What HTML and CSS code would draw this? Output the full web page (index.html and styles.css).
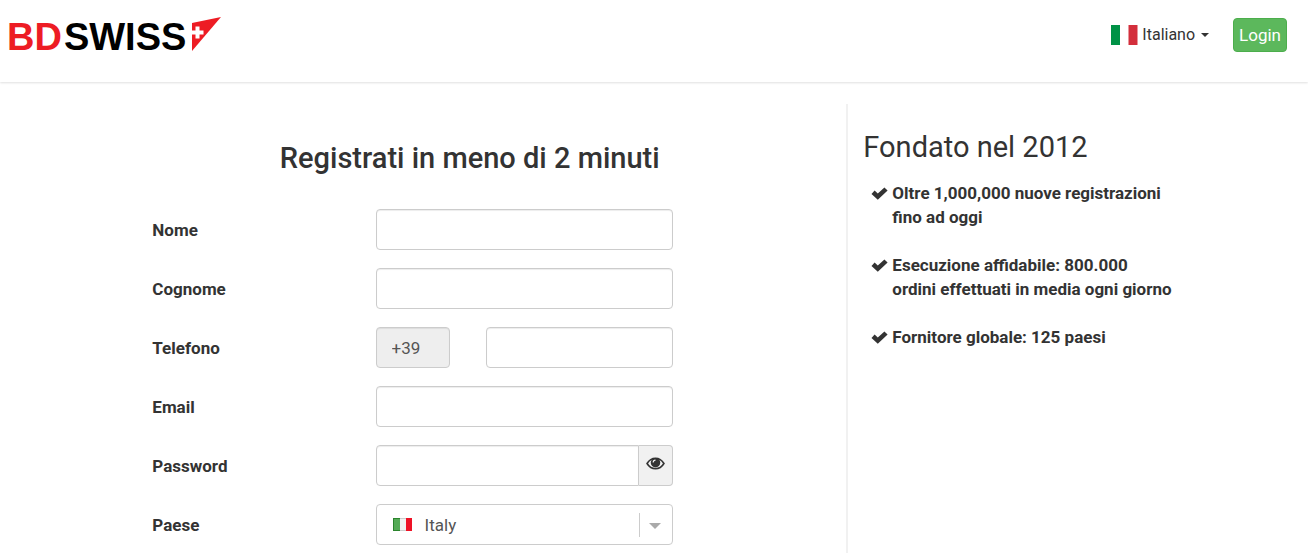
FILE: index.html
```html
<!DOCTYPE html>
<html lang="it">
<head>
    <meta charset="UTF-8">
    <meta name="viewport" content="width=device-width, initial-scale=1.0">
    <title>Registrati - BDSwiss</title>
    <link rel="stylesheet" href="styles.css">
</head>
<body>
    <header class="header">
        <a href="#" class="logo">
            <span class="logo-bd">BD</span><span class="logo-swiss">SWISS</span>
            <svg class="logo-flag" width="29" height="34" viewBox="0 0 29 34" aria-hidden="true">
                <path d="M0 6L29 0L0 34Z" fill="#ed1c24"/>
                <path d="M3.5 9.5h4v4h4v4h-4v4h-4v-4h-4v-4h4z" fill="#fff"/>
            </svg>
        </a>

        <div class="header-right">
            <button type="button" class="language">
                <svg width="27" height="20" viewBox="0 0 27 20" aria-hidden="true">
                    <rect width="27" height="20" fill="#fff"/>
                    <rect width="9" height="20" fill="#009246"/>
                    <rect x="17.5" width="9" height="20" fill="#d32f3c"/>
                </svg>
                Italiano
                <span class="caret"></span>
            </button>
            <button type="button" class="login-btn">Login</button>
        </div>
    </header>

    <div class="content">
        <main class="main">
            <h1>Registrati in meno di 2 minuti</h1>

            <form id="signupForm">
                <div class="form-group">
                    <label for="name">Nome</label>
                    <input type="text" id="name" name="name">
                </div>

                <div class="form-group">
                    <label for="surname">Cognome</label>
                    <input type="text" id="surname" name="surname">
                </div>

                <div class="form-group">
                    <label for="phone">Telefono</label>
                    <div class="phone">
                        <input type="text" class="prefix" name="prefix" value="+39" aria-label="Prefisso" disabled>
                        <input type="tel" id="phone" name="phone">
                    </div>
                </div>

                <div class="form-group">
                    <label for="email">Email</label>
                    <input type="email" id="email" name="email">
                </div>

                <div class="form-group">
                    <label for="password">Password</label>
                    <div class="password">
                        <input type="password" id="password" name="password">
                        <button type="button" class="eye-btn" aria-label="Mostra password">
                            <svg width="19" height="13" viewBox="0 0 18 12" aria-hidden="true">
                                <path d="M1 6Q4 1 9 1T17 6Q14 11 9 11T1 6Z" fill="none" stroke="#333" stroke-width="1.5"/>
                                <circle cx="9" cy="5.2" r="4.5" fill="#333"/>
                                <path d="M6.8 5Q6.8 2.8 9 2.8" fill="none" stroke="#f1f1f1" stroke-width="1"/>
                            </svg>
                        </button>
                    </div>
                </div>

                <div class="form-group">
                    <label for="country">Paese</label>
                    <div class="country">
                        <select id="country" name="country">
                            <option value="it">Italy</option>
                        </select>
                        <svg class="country-flag" width="19" height="13" viewBox="0 0 19 13" aria-hidden="true">
                            <rect width="19" height="13" fill="#ccc"/>
                            <rect x="6" y="1" width="7" height="11" fill="#f1f1f1"/>
                            <rect width="7" height="13" fill="#2b842d"/>
                            <rect x="1" y="1" width="6" height="11" fill="#55ab57"/>
                            <rect x="13" width="6" height="13" fill="#ee1226"/>
                        </svg>
                        <span class="country-arrow"></span>
                    </div>
                </div>
            </form>
        </main>

        <aside class="sidebar">
            <h2>Fondato nel 2012</h2>
            <ul>
                <li>
                    <svg class="check" width="17" height="13" viewBox="0 0 17 13" aria-hidden="true"><path d="M.5 7L3.6 3.6L6.8 6.4L13.4 .4L16.6 3.4L6.8 12.8Z"/></svg>
                    Oltre 1,000,000 nuove registrazioni fino ad oggi
                </li>
                <li>
                    <svg class="check" width="17" height="13" viewBox="0 0 17 13" aria-hidden="true"><path d="M.5 7L3.6 3.6L6.8 6.4L13.4 .4L16.6 3.4L6.8 12.8Z"/></svg>
                    Esecuzione affidabile: 800.000 ordini effettuati in media ogni giorno
                </li>
                <li>
                    <svg class="check" width="17" height="13" viewBox="0 0 17 13" aria-hidden="true"><path d="M.5 7L3.6 3.6L6.8 6.4L13.4 .4L16.6 3.4L6.8 12.8Z"/></svg>
                    Fornitore globale: 125 paesi
                </li>
            </ul>
        </aside>
    </div>
</body>
</html>
```
FILE: styles.css
```css
* {
    box-sizing: border-box;
}

body {
    font-family: Roboto, Arial, sans-serif;
    font-size: 17px;
    line-height: 24px;
    color: #333;
    background-color: #fff;
    margin: 0;
}

button,
input,
select {
    font-family: inherit;
    font-size: 17px;
    color: #333;
}

/* Header */
.header {
    display: flex;
    justify-content: space-between;
    align-items: flex-start;
    height: 82px;
    padding: 17px 21px 0 7px;
    box-shadow: 0 1px 2px rgba(0, 0, 0, 0.12);
}

.logo {
    display: flex;
    font-family: "Liberation Sans", Arial, sans-serif;
    font-size: 38px;
    font-weight: bold;
    line-height: 40px;
    text-decoration: none;
}

.logo-bd {
    margin-right: 2px;
    color: #ed1c24;
}

.logo-swiss {
    color: #000;
}

.logo-flag {
    margin-left: 6px;
}

.header-right {
    display: flex;
    align-items: center;
    gap: 24px;
}

.language {
    display: flex;
    align-items: center;
    gap: 4px;
    padding: 0;
    border: none;
    background: none;
    font-size: 16px;
    cursor: pointer;
}

.caret {
    border-top: 4px solid #333;
    border-left: 4px solid transparent;
    border-right: 4px solid transparent;
    margin-left: 2px;
}

.login-btn {
    height: 34px;
    margin-top: 1px;
    padding: 0 5px;
    border: 1px solid #4cae4c;
    border-radius: 4px;
    background-color: #5cb85c;
    color: #fff;
    cursor: pointer;
}

/* Page columns */
.content {
    display: grid;
    grid-template-columns: 11fr 6fr;
    margin-top: 22px;
}

.main {
    padding: 36px 7% 0 18%;
}

h1 {
    margin: 0 0 33px;
    font-size: 29px;
    font-weight: 500;
    line-height: 36px;
    text-align: center;
}

/* Sign up form */
form {
    max-width: 521px;
}

.form-group {
    display: grid;
    grid-template-columns: 3fr 4fr;
    align-items: center;
    margin-bottom: 18px;
}

label {
    font-weight: bold;
}

input,
select {
    width: 100%;
    height: 41px;
    padding: 0 15px;
    border: 1px solid #ccc;
    border-radius: 4px;
    background-color: #fff;
    box-shadow: inset 0 1px 1px rgba(0, 0, 0, 0.075);
    color: #555;
}

input:focus,
select:focus {
    border-color: #66afe9;
    outline: none;
}

.phone {
    display: grid;
    grid-template-columns: 2fr 5fr;
    gap: 36px;
}

.prefix {
    background-color: #eee;
}

.password {
    display: flex;
}

.password input {
    flex: 1;
    min-width: 0;
    border-radius: 4px 0 0 4px;
}

.eye-btn {
    width: 34px;
    padding: 0 0 4px;
    border: 1px solid #ccc;
    border-left: none;
    border-radius: 0 4px 4px 0;
    background-color: #f1f1f1;
    cursor: pointer;
}

.country {
    position: relative;
}

.country select {
    appearance: none;
    padding-left: 48px;
    box-shadow: none;
}

.country-flag {
    position: absolute;
    top: 14px;
    left: 17px;
    pointer-events: none;
}

.country-arrow {
    position: absolute;
    top: 9px;
    right: 0;
    width: 34px;
    height: 24px;
    border-left: 1px solid #ccc;
    pointer-events: none;
}

.country-arrow::after {
    content: "";
    position: absolute;
    top: 10px;
    left: 9px;
    border-top: 6px solid #aaa;
    border-left: 6px solid transparent;
    border-right: 6px solid transparent;
}

/* Right column */
.sidebar {
    min-height: calc(100vh - 104px);
    padding: 24px 15px 0;
    border-left: 2px solid #f1f1f1;
}

h2 {
    margin: 0 0 15px;
    font-size: 29px;
    font-weight: 400;
    line-height: 38px;
}

ul {
    max-width: 310px;
    margin: 0;
    padding: 0;
    list-style: none;
}

li {
    position: relative;
    margin-bottom: 24px;
    padding-left: 29px;
    font-weight: bold;
}

.check {
    position: absolute;
    top: 6px;
    left: 8px;
    fill: #333;
}
```
